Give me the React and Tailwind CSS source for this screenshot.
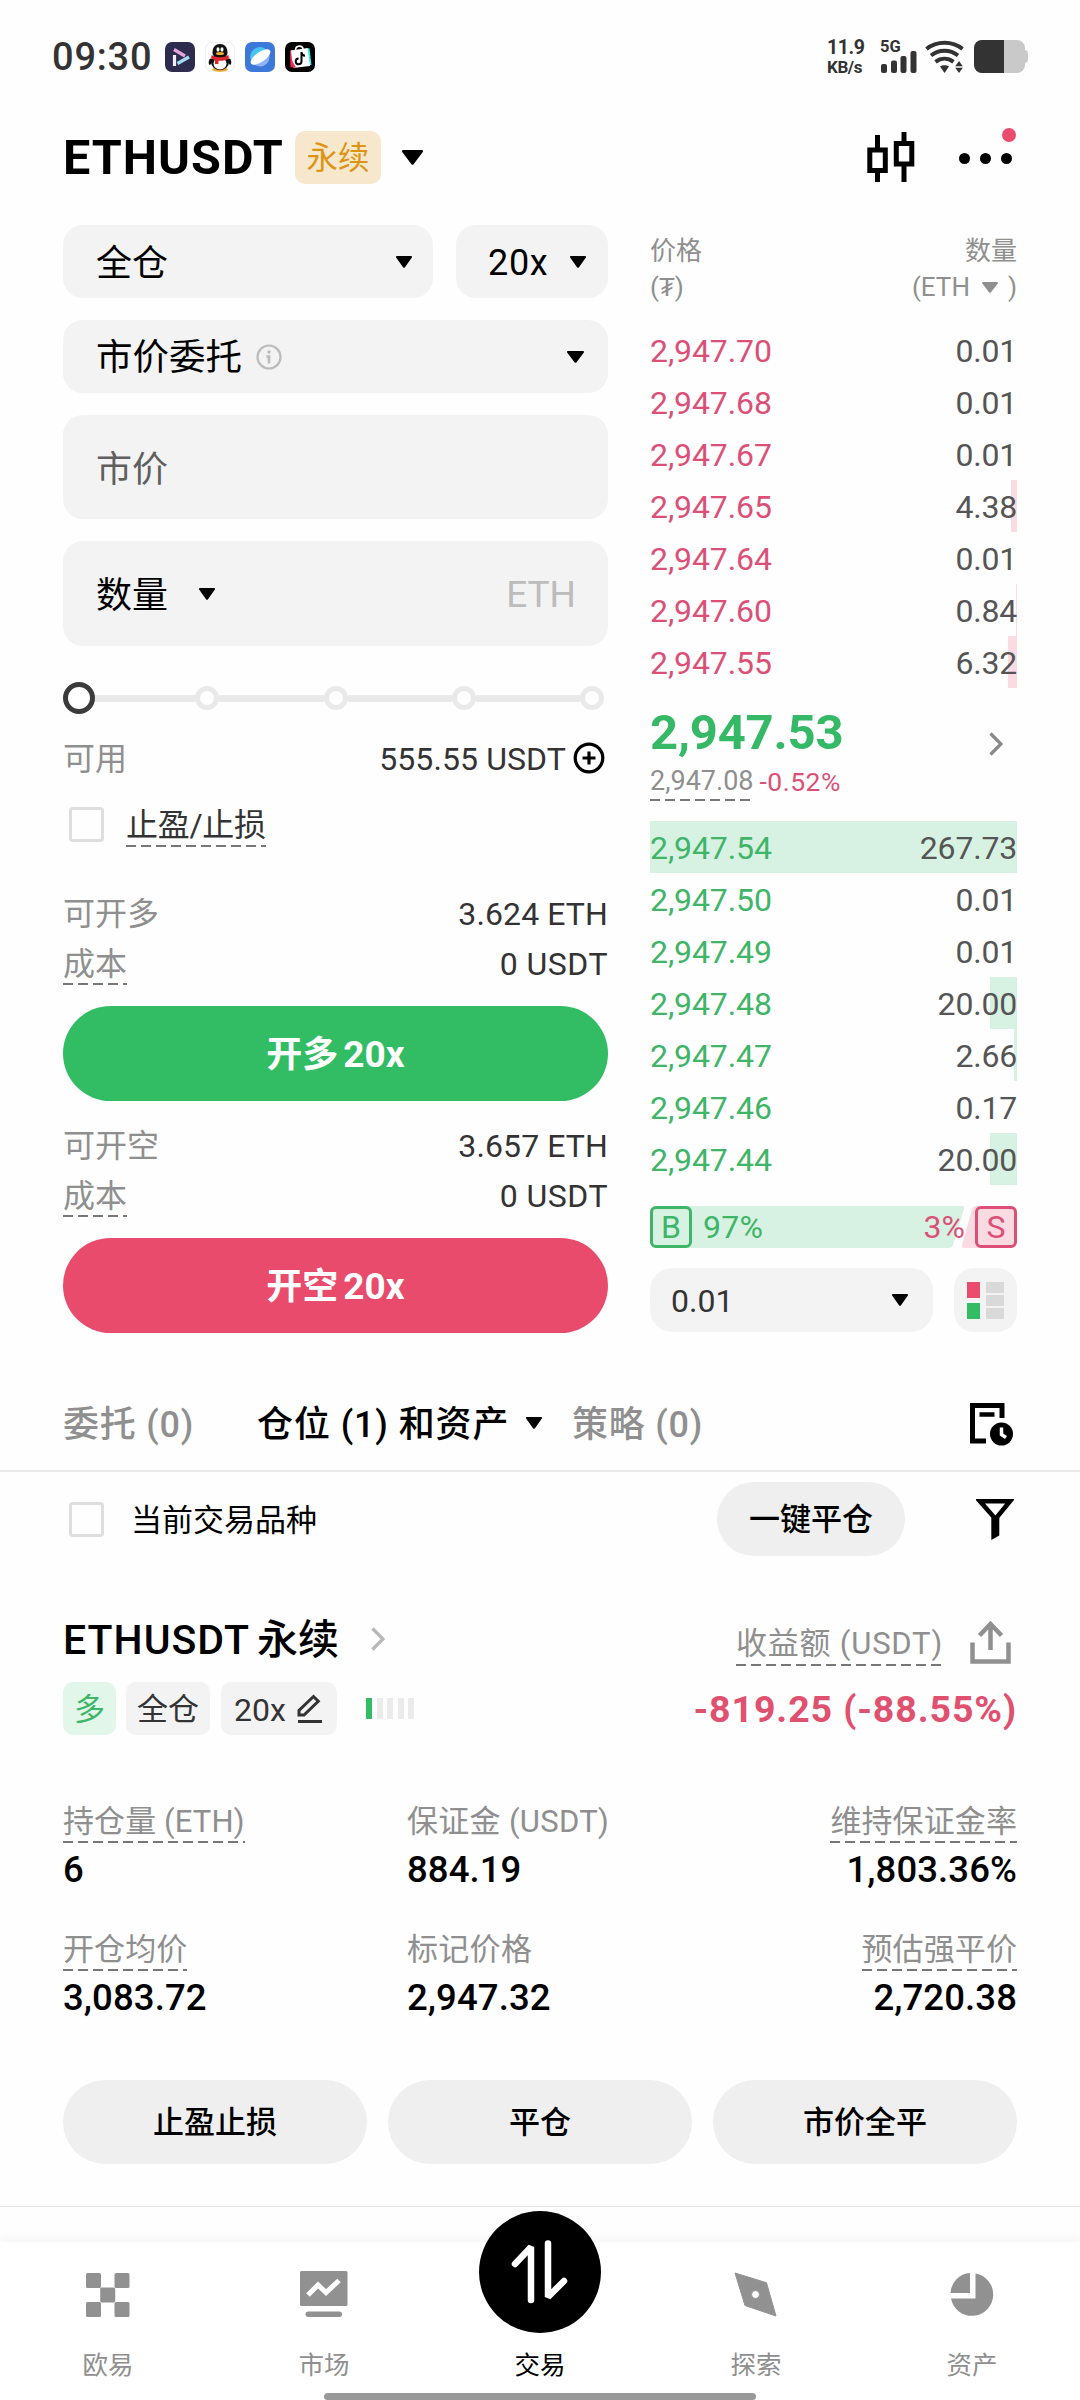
import React from "react";

const SANS = "font-['Roboto','Noto_Sans_CJK_SC',sans-serif]";

function Caret({ className = "w-4 h-3 text-black" }) {
  return (
    <svg viewBox="0 0 16 12" preserveAspectRatio="none" className={`shrink-0 ${className}`} fill="currentColor">
      <path d="M1 0h14c.9 0 1.3 1 .7 1.7L8.8 11.4c-.4.6-1.200.6-1.600 0L.3 1.700C-.3 1 .1 0 1 0z" />
    </svg>
  );
}

function Dashed({ children, className = "" }) {
  return (
    <span className={`relative ${className}`}>
      {children}
      <span className="absolute left-0 right-0 bottom-0 h-[2px] bg-[repeating-linear-gradient(90deg,#777_0_10px,transparent_10px_15px)]" />
    </span>
  );
}

function Checkbox() {
  return <span className="block size-[35px] rounded-[4px] border-[3px] border-[#dedede]" />;
}

function StatusBar() {
  return (
    <div className="flex h-[114px] shrink-0 items-center pl-[52px] pr-[51px] text-[#333]">
      <span className="w-[113px] text-[38px] leading-none font-medium tracking-[0.8px]">09:30</span>
      <div className="flex gap-[10px]">
        <svg viewBox="0 0 30 30" className="size-[30px]">
          <rect width="30" height="30" rx="7" fill="#2d2b4e" />
          <path d="M9.500 13v11" stroke="#f1eefc" strokeWidth="3.200" />
          <path d="M9 7.500l11 6.500" stroke="#e7a4dc" strokeWidth="3.200" />
          <path d="M12.500 21.500L24 15" stroke="#a3dcf0" strokeWidth="3.200" />
        </svg>
        <svg viewBox="0 0 30 30" className="size-[30px]">
          <rect x=".5" y=".5" width="29" height="29" rx="7" fill="#fff" stroke="#eee" />
          <ellipse cx="15" cy="27.500" rx="8" ry="2.200" fill="#f0ab2c" />
          <path d="M5 16.500c-2 3-1.500 6 0 6.500l4-5zM25 16.500c2 3 1.500 6 0 6.500l-4-5z" fill="#111" />
          <ellipse cx="15" cy="20" rx="9" ry="8.300" fill="#111" />
          <ellipse cx="15" cy="21.500" rx="6.500" ry="6" fill="#fff" />
          <path d="M7.500 11C7.500 5 10.500 2 15 2s7.500 3 7.500 9c0 3-3 5-7.500 5s-7.500-2-7.500-5z" fill="#111" />
          <ellipse cx="13" cy="7.500" rx="1.500" ry="2.200" fill="#fff" />
          <ellipse cx="17" cy="7.500" rx="1.500" ry="2.200" fill="#fff" />
          <ellipse cx="15" cy="11.500" rx="4" ry="1.500" fill="#f0ab2c" />
          <path d="M6.500 13c4 3 13 3 17 0l.5 3.500c-3 1.800-7 2.500-10.500 2.200V22h-3.500v-4c-1.500-.4-3-1-4-1.500z" fill="#e0252c" />
        </svg>
        <svg viewBox="0 0 30 30" className="size-[30px]">
          <rect width="30" height="30" rx="7" fill="#3c78d8" />
          <circle cx="15" cy="15" r="9.500" fill="#8fb4f4" />
          <path d="M6 18a9.500 9.500 0 0 1 15-10.500z" fill="#45c3f2" />
          <ellipse cx="15.500" cy="15" rx="11.500" ry="5" transform="rotate(-35 15.500 15)" fill="#fff" />
        </svg>
        <svg viewBox="0 0 30 30" className="size-[30px]">
          <rect width="30" height="30" rx="7" fill="#000" />
          <path d="M10.500 8c.2-5 7-5 7.500-1" fill="none" stroke="#fff" strokeWidth="1.600" />
          <path d="M5 8.500l3-.5-1 17-1.500.5z" fill="#fe2c55" />
          <path d="M22 6l2.500.5L26.500 23l-4 .5z" fill="#25f4ee" />
          <path d="M6 8.500L22.500 6 25 24 8 26z" fill="#fff" />
          <path d="M5.500 16L8 26l3-.4z" fill="#fe2c55" />
          <path d="M16.500 10v9.300a2.900 2.900 0 1 1-2.900-2.900M16.500 10.500c.3 2 1.500 3 3.500 3.200" fill="none" stroke="#000" strokeWidth="2" />
        </svg>
      </div>
      <div className="ml-auto flex items-start">
        <div className="flex w-[53px] flex-col items-start pt-0 font-bold">
          <span className="text-[19.500px] leading-[16px] tracking-[-0.4px]">11.9</span>
          <span className="mt-[4px] text-[17px] leading-[15px] tracking-[-0.4px]">KB/s</span>
        </div>
        <div className="relative h-[33px] w-[39px]">
          <span className="absolute left-0 top-0 text-[16.500px] font-bold leading-[14px]">5G</span>
          <svg viewBox="0 0 39 33" className="h-[33px] w-[39px]" fill="#333">
            <rect x="1" y="24" width="6" height="9" rx="2" />
            <rect x="11" y="20.500" width="6" height="12.500" rx="2" />
            <rect x="20.500" y="16" width="6" height="17" rx="2" />
            <rect x="30.500" y="11" width="6" height="22" rx="2" />
          </svg>
        </div>
        <svg viewBox="0 0 48 33" className="ml-[6px] h-[33px] w-[48px]" fill="none" stroke="#333" strokeWidth="4">
          <path d="M1.500 9c10-8.300 26-8.300 36 0" />
          <path d="M6 15.500c8-6.300 19-6.300 27 0" />
          <path d="M10.500 21.800c5.500-4 12.500-4 18 0" />
          <path d="M15 26.500c2.500-1.800 6.500-1.800 9 0L19.500 33z" fill="#333" stroke="none" />
          <path d="M34 21l3.800 5.200h-7.600zM34 33l3.800-5.200h-7.600z" fill="#333" stroke="none" />
        </svg>
        <svg viewBox="0 0 56 33" className="h-[33px] w-[56px]">
          <path d="M9 0h35a8 8 0 0 1 8 8v2c2 .5 3 1.500 3 3.500v6c0 2-1 3-3 3.500v2a8 8 0 0 1-8 8H9a8 8 0 0 1-8-8V8a8 8 0 0 1 8-8z" fill="#c9c9c9" />
          <path d="M9 0h22v33H9a8 8 0 0 1-8-8V8a8 8 0 0 1 8-8z" fill="#333" />
        </svg>
      </div>
    </div>
  );
}

function Header() {
  return (
    <div className="flex h-[86px] shrink-0 items-center pl-[63px] pr-[63px]">
      <span className="w-[232px] pt-[2px] text-[48.500px] font-bold leading-none tracking-[1px]">ETHUSDT</span>
      <span className="flex h-[53px] w-[86px] items-center justify-center rounded-[10px] bg-[#f7e8cd] pt-[4px] text-[31.500px] text-[#dd9413]">永续</span>
      <Caret className="ml-[21px] h-[15px] w-[21px] text-black" />
      <svg viewBox="0 0 48 50" className="ml-auto h-[50px] w-[48px]" fill="none" stroke="#000" strokeWidth="5">
        <rect x="2.800" y="18" width="15.500" height="20.500" />
        <path d="M10.500 3v14M10.500 39v11" />
        <rect x="29.300" y="11.500" width="15.500" height="20.500" />
        <path d="M37 0v11M37 33v17" />
      </svg>
      <span className="relative ml-[44px] flex gap-[10px] pt-[2px]">
        <i className="size-[11px] rounded-full bg-black" />
        <i className="size-[11px] rounded-full bg-black" />
        <i className="size-[11px] rounded-full bg-black" />
        <i className="absolute -right-[4px] -top-[23px] size-[14px] rounded-full bg-[#eb4b6d]" />
      </span>
      <span className="w-[5px]" />
    </div>
  );
}

function Field({ className, children }) {
  return <div className={`flex items-center rounded-[20px] bg-[#f3f3f3] ${className}`}>{children}</div>;
}

function Slider() {
  return (
    <div className="mt-[36px] flex h-8 items-center">
      <i className="relative -mr-1 size-8 shrink-0 rounded-full border-[5px] border-[#3b3b3b] bg-white" />
      {[0, 1, 2, 3].map((n) => (
        <React.Fragment key={n}>
          <i className="h-[7px] flex-1 bg-[#e9e9e9]" />
          <i className="size-6 shrink-0 rounded-full border-[5px] border-[#e9e9e9]" />
        </React.Fragment>
      ))}
      <i className="w-1" />
    </div>
  );
}

function InfoRow({ label, value, dashed, className = "" }) {
  return (
    <div className={`flex h-[50px] items-center justify-between text-[32px] ${className}`}>
      {dashed ? (
        <Dashed className="flex h-[44px] items-center pt-[2px] text-[#8f8f8f]">{label}</Dashed>
      ) : (
        <span className="pt-[2px] text-[#8f8f8f]">{label}</span>
      )}
      <span className="pt-px tracking-[0.1px] text-[#333]">{value}</span>
    </div>
  );
}

function OrderForm() {
  return (
    <div className="flex w-[545px] flex-col">
      <div className="flex gap-[23px]">
        <Field className="h-[73px] w-[370px] justify-between pl-[33px] pr-[21px] text-[36px]">
          <span className="pt-[4px]">全仓</span>
          <Caret />
        </Field>
        <Field className="h-[73px] flex-1 justify-between pl-[32px] pr-[22px] text-[36px]">
          <span className="pt-[3px] tracking-[0.7px]">20x</span>
          <Caret />
        </Field>
      </div>
      <Field className="mt-[22px] h-[73px] pl-[33px] pr-[24px] text-[36.500px]">
        <span className="pt-[4px]">市价委托</span>
        <svg viewBox="0 0 26 26" className="ml-[14px] size-[26px]">
          <circle cx="13" cy="13" r="11.500" fill="none" stroke="#bbb" strokeWidth="2.200" />
          <circle cx="13" cy="8" r="1.700" fill="#bbb" />
          <path d="M10.500 12.500H13V19.500" fill="none" stroke="#bbb" strokeWidth="2.600" />
        </svg>
        <Caret className="ml-auto h-3 w-[17px] text-black" />
      </Field>
      <Field className="mt-[22px] h-[104px] pl-[33px] pt-[6px] text-[36px] text-[#5f5f5f]">市价</Field>
      <Field className="mt-[22px] h-[105px] pl-[33px] pr-[32px] text-[36px]">
        <span className="pt-[5px]">数量</span>
        <Caret className="ml-[31px] h-3 w-4 text-black" />
        <span className="ml-auto pt-[3px] text-[37px] text-[#bcbcbc]">ETH</span>
      </Field>
      <Slider />
      <div className="mt-[22px] flex h-[44px] items-center text-[32px]">
        <span className="pt-px text-[#8f8f8f]">可用</span>
        <span className="ml-auto mr-[7px] pt-px text-[#333] tracking-[0.1px]">555.55 USDT</span>
        <svg viewBox="0 0 32 32" className="mr-[3px] size-[32px]" fill="none" stroke="#000" strokeWidth="3.200">
          <circle cx="16" cy="16" r="13.800" />
          <path d="M16 9.500v13M9.500 16h13" />
        </svg>
      </div>
      <div className="mt-[22px] flex h-[45px] items-center pl-[6px] text-[32px] text-[#333]">
        <Checkbox />
        <Dashed className="ml-[22px] flex h-[44px] items-center pt-px tracking-[-0.3px]">止盈/止损</Dashed>
      </div>
      <InfoRow className="mt-[41px]" label="可开多" value="3.624 ETH" />
      <InfoRow dashed label="成本" value={<span className="tracking-[0.5px]">0 USDT</span>} />
      <button className="mt-[18px] h-[95px] rounded-full bg-[#32bd65] pt-[2px] text-[36px] font-bold text-white">
        开多<span className="ml-[5px] text-[37px]">20x</span>
      </button>
      <InfoRow className="mt-[19px]" label="可开空" value="3.657 ETH" />
      <InfoRow dashed label="成本" value={<span className="tracking-[0.5px]">0 USDT</span>} />
      <button className="mt-[18px] h-[95px] rounded-full bg-[#e94b6c] pt-[2px] text-[36px] font-bold text-white">
        开空<span className="ml-[5px] text-[37px]">20x</span>
      </button>
    </div>
  );
}

const ASKS = [
  ["2,947.70", "0.01", 0],
  ["2,947.68", "0.01", 0],
  ["2,947.67", "0.01", 0],
  ["2,947.65", "4.38", 6],
  ["2,947.64", "0.01", 0],
  ["2,947.60", "0.84", 1],
  ["2,947.55", "6.32", 9],
];
const BIDS = [
  ["2,947.54", "267.73", 367],
  ["2,947.50", "0.01", 0],
  ["2,947.49", "0.01", 0],
  ["2,947.48", "20.00", 27],
  ["2,947.47", "2.66", 3],
  ["2,947.46", "0.17", 0],
  ["2,947.44", "20.00", 27],
];

function BookRow({ row, color, bar }) {
  return (
    <div className="relative flex h-[52px] items-center justify-between pt-px text-[32px]">
      <span className={`absolute inset-y-0 right-0 ${bar}`} style={{ width: row[2] }} />
      <span className={`relative tracking-[-0.1px] ${color}`}>{row[0]}</span>
      <span className="relative tracking-[-0.2px] text-[#555]">{row[1]}</span>
    </div>
  );
}

function OrderBook() {
  return (
    <div className="flex w-[367px] flex-col">
      <div className="mt-[7px] flex justify-between text-[26px] leading-[36px] text-[#8f8f8f]">
        <div className="pt-px">
          价格
          <br />
          (₮)
        </div>
        <div className="pt-px text-right">
          数量
          <div className="flex items-center justify-end">
            (ETH
            <Caret className="ml-[12px] mr-[10px] h-[11px] w-4 text-[#8f8f8f]" />)
          </div>
        </div>
      </div>
      <div className="mt-[19px]">
        {ASKS.map((r) => (
          <BookRow key={r[0]} row={r} color="text-[#dc5078]" bar="bg-[#fbdbe2]" />
        ))}
      </div>
      <div className="mt-5 flex">
        <div>
          <div className="pt-px text-[49px] font-bold leading-[48px] tracking-[-0.2px] text-[#36b966]">2,947.53</div>
          <div className="mt-[6px] flex h-[37px] items-center text-[27px]">
            <Dashed className="flex h-[38px] items-center text-[#8f8f8f]">2,947.08</Dashed>
            <span className="ml-[6px] pt-px text-[26.500px] tracking-[0.5px] text-[#dc5078]">-0.52%</span>
          </div>
        </div>
        <svg viewBox="0 0 14 24" className="ml-auto mr-[14px] mt-[24px] h-[24px] w-[14px]" fill="none" stroke="#8a8a8a" strokeWidth="3.300">
          <path d="M1.500 1.500L12 12 1.500 22.500" />
        </svg>
      </div>
      <div className="mt-[21px]">
        {BIDS.map((r) => (
          <BookRow key={r[0]} row={r} color="text-[#3fb568]" bar="bg-[#d7f1e2]" />
        ))}
      </div>
      <div className="relative mt-[21px] flex h-[42px] items-center text-[32px]">
        <svg viewBox="0 0 367 42" className="absolute inset-0 h-[42px] w-[367px]">
          <path d="M6 0H312q3 0 2 3L303 39q-1 3-4 3H6a6 6 0 0 1-6-6V6a6 6 0 0 1 6-6z" fill="#d7f1e2" />
          <path d="M326 0h35a6 6 0 0 1 6 6v30a6 6 0 0 1-6 6H314q-3 0-2-3l10-36q1-3 4-3z" fill="#fbdbe2" />
        </svg>
        <span className="relative flex size-[42px] items-center justify-center rounded-[6px] border-[3px] border-[#3fb568] text-[32px] text-[#3fb568]">B</span>
        <span className="relative ml-[11px] tracking-[0.3px] text-[#3fb568]">97%</span>
        <span className="relative ml-auto mr-[10px] text-[#dc5078]">3%</span>
        <span className="relative flex size-[42px] items-center justify-center rounded-[6px] border-[3px] border-[#dc5078] text-[32px] text-[#dc5078]">S</span>
      </div>
      <div className="mt-5 flex gap-[21px]">
        <div className="flex h-[64px] flex-1 items-center justify-between rounded-[22px] bg-[#f3f3f3] pl-[21px] pr-[25px] text-[32px] text-[#333]">
          <span className="pt-[2px]">0.01</span>
          <Caret className="h-3 w-4 text-black" />
        </div>
        <div className="flex h-[64px] w-[63px] items-center justify-center rounded-[20px] bg-[#f3f3f3] pr-px">
          <svg viewBox="0 0 37 37" className="size-[37px]">
            <rect width="13" height="16" fill="#eb4b6d" />
            <rect y="21" width="13" height="16" fill="#32bd65" />
            <rect x="19" width="18" height="11" fill="#d9d9d9" />
            <rect x="19" y="13" width="18" height="11" fill="#d9d9d9" />
            <rect x="19" y="26" width="18" height="11" fill="#d9d9d9" />
          </svg>
        </div>
      </div>
    </div>
  );
}

function Tabs() {
  return (
    <div className="mt-[43px] flex h-[96px] shrink-0 items-center border-b-2 border-[#e9e9e9] pl-[63px] pr-[67px] text-[36px] font-medium text-[#8f8f8f]">
      <span className="w-[194px] pt-[4px] tracking-[0.8px]">委托 (0)</span>
      <span className="w-[251px] whitespace-nowrap pt-[4px] tracking-[0.9px] text-black">仓位 (1) 和资产</span>
      <Caret className="ml-[18px] h-3 w-4 text-black" />
      <span className="ml-[30px] pt-[4px] tracking-[0.8px]">策略 (0)</span>
      <svg viewBox="0 0 43 43" className="ml-auto mt-[2px] size-[43px]">
        <path d="M32 15V2.500H2.500V38H16" fill="none" stroke="#000" strokeWidth="5" />
        <path d="M9.500 11.500h15" stroke="#000" strokeWidth="4.500" />
        <circle cx="31.500" cy="31" r="11.500" fill="#000" />
        <path d="M31.500 24.500v7l4.500 3" fill="none" stroke="#fff" strokeWidth="3.500" />
      </svg>
    </div>
  );
}

function Stat({ label, value, dashed, className = "" }) {
  return (
    <div className={`flex flex-col ${className}`}>
      {dashed ? (
        <Dashed className="flex h-[44px] items-center pt-[2px] text-[31px] tracking-[0.1px] text-[#8f8f8f]">{label}</Dashed>
      ) : (
        <span className="flex h-[44px] items-center pt-[2px] text-[31px] tracking-[0.3px] text-[#8f8f8f]">{label}</span>
      )}
      <span className="mt-[2px] h-[48px] pt-px text-[36.500px] font-medium leading-[48px] tracking-[0.1px]">{value}</span>
    </div>
  );
}

function Position() {
  return (
    <div className="flex flex-col px-[63px]">
      <div className="mt-[10px] flex h-[74px] items-center pl-[6px]">
        <Checkbox />
        <span className="ml-[27px] pt-[5px] text-[31px]">当前交易品种</span>
        <button className="ml-auto h-[74px] w-[188px] rounded-full bg-[#efefef] pt-[3px] text-[31px] font-medium">一键平仓</button>
        <svg viewBox="0 0 38 43" className="ml-[71px] mr-[3px] h-[43px] w-[38px]">
          <path d="M4 3.300H34L19.500 21z" fill="none" stroke="#000" strokeWidth="4.600" />
          <path d="M15.300 20h8v17.500l-8 4.500z" fill="#000" />
        </svg>
      </div>
      <div className="mt-[55px] flex h-[56px] items-center">
        <span className="w-[306px] whitespace-nowrap pt-px text-[41px] font-medium leading-[56px]">
          <span className="tracking-[1px]">ETHUSDT</span>
          <span className="ml-[7px]">永续</span>
        </span>
        <svg viewBox="0 0 14 24" className="ml-[2px] h-[24px] w-[14px]" fill="none" stroke="#b8b8b8" strokeWidth="3.300">
          <path d="M1.500 1.500L12 12 1.500 22.500" />
        </svg>
        <Dashed className="ml-auto mt-[10px] flex h-[44px] items-center text-[31px] tracking-[0.8px] text-[#8f8f8f]">收益额 (USDT)</Dashed>
        <svg viewBox="0 0 41 43" className="ml-[27px] mr-[6px] mt-[7px] h-[43px] w-[41px]" fill="none" stroke="#909090" strokeWidth="4.500">
          <path d="M2.500 21.500V40.500H38.500V21.500M20.500 29V3M9.500 14.500l11-11.500 11 11.500" />
        </svg>
      </div>
      <div className="mt-[15px] flex h-[53px] items-center text-[31px] text-[#333]">
        <span className="flex h-[53px] w-[53px] items-center justify-center rounded-[10px] bg-[#e2f6ea] pt-[3px] text-[#3fb568]">多</span>
        <span className="ml-[10px] flex h-[53px] w-[84px] items-center justify-center rounded-[10px] bg-[#f3f3f3] pt-[3px]">全仓</span>
        <span className="ml-[11px] flex h-[53px] w-[116px] items-center justify-center rounded-[10px] bg-[#f3f3f3]">
          <span className="pt-[2px] text-[32px]">20x</span>
          <svg viewBox="0 0 28 30" className="ml-[10px] h-[30px] w-[28px]" fill="none" stroke="#333" strokeWidth="3">
            <path d="M3 21v-4.500L17.500 2.500l4.800 4.800L8 21z" />
            <path d="M2 27.500h24" />
          </svg>
        </span>
        <span className="ml-[29px] flex h-[21px] gap-[4.500px]">
          <i className="w-[6px] bg-[#32bd65]" />
          <i className="w-[6px] bg-[#ebebeb]" />
          <i className="w-[6px] bg-[#ebebeb]" />
          <i className="w-[6px] bg-[#ebebeb]" />
          <i className="w-[6px] bg-[#ebebeb]" />
        </span>
        <span className="ml-auto pt-px text-[37.500px] font-bold tracking-[0.9px] text-[#e0506f]">-819.25 (-88.55%)</span>
      </div>
      <div className="mt-[64px] grid grid-cols-[344px_1fr_auto] gap-y-[34px]">
        <Stat className="items-start" label="持仓量 (ETH)" value="6" dashed />
        <Stat className="items-start" label="保证金 (USDT)" value="884.19" />
        <Stat className="items-end" label="维持保证金率" value="1,803.36%" dashed />
        <Stat className="items-start" label="开仓均价" value="3,083.72" dashed />
        <Stat className="items-start" label="标记价格" value="2,947.32" />
        <Stat className="items-end" label="预估强平价" value="2,720.38" dashed />
      </div>
      <div className="mt-[59px] grid grid-cols-3 gap-[21px] text-[31px] font-medium">
        <button className="h-[84px] rounded-full bg-[#efefef] pt-[3px]">止盈止损</button>
        <button className="h-[84px] rounded-full bg-[#efefef] pt-[3px]">平仓</button>
        <button className="h-[84px] rounded-full bg-[#efefef] pt-[3px]">市价全平</button>
      </div>
    </div>
  );
}

function NavItem({ label, children }) {
  return (
    <div className="flex flex-1 flex-col items-center pt-[27px]">
      <svg viewBox="0 0 50 50" className="size-[50px]" fill="#919191">
        {children}
      </svg>
      <span className="mt-[28px] text-[25.500px] leading-[36px] text-[#8f8f8f]">{label}</span>
    </div>
  );
}

function BottomNav() {
  return (
    <div className="relative mt-[35px] flex h-[158px] shrink-0 bg-white shadow-[0_-4px_10px_rgba(0,0,0,0.04)]">
      <NavItem label="欧易">
        <rect x="3" y="4" width="15" height="15" rx="1.500" />
        <rect x="31.500" y="4" width="15" height="15" rx="1.500" />
        <rect x="17.200" y="18.500" width="15" height="15" rx="1.500" />
        <rect x="3" y="33" width="15" height="15" rx="1.500" />
        <rect x="31.500" y="33" width="15" height="15" rx="1.500" />
      </NavItem>
      <NavItem label="市场">
        <rect x="1" y="2" width="47.500" height="35" rx="1.500" />
        <rect x="6.500" y="42.500" width="36.500" height="5.500" rx="2.750" />
        <path d="M9 26l10-10 8 7.500L40 11.500" fill="none" stroke="#fff" strokeWidth="5" />
      </NavItem>
      <div className="flex flex-1 flex-col items-center">
        <svg viewBox="0 0 122 122" className="-mt-[31px] size-[122px]">
          <circle cx="61" cy="61" r="61" fill="#000" />
          <path d="M36 53L52 36v53M69 32.500v53.500L85 70" fill="none" stroke="#fff" strokeWidth="6.500" strokeLinecap="round" strokeLinejoin="bevel" />
        </svg>
        <span className="mt-[14px] text-[25.500px] leading-[36px] text-black">交易</span>
      </div>
      <NavItem label="探索">
        <path fillRule="evenodd" d="M4 4L35.500 13.700 45 47 14 36.500zM24.500 21.500a4 4 0 1 0 0 8 4 4 0 0 0 0-8z" stroke="#919191" strokeWidth="1" strokeLinejoin="round" />
      </NavItem>
      <NavItem label="资产">
        <path d="M23 4V24H3.500A21 21 0 0 1 23 4z" />
        <path d="M28.500 4.500A21.300 21.300 0 1 1 4 29.500H28.500z" />
      </NavItem>
      <span className="absolute bottom-0 left-[324px] h-[7px] w-[432px] rounded-full bg-[#999]" />
    </div>
  );
}

export default function App() {
  return (
    <div className={`flex h-[2400px] w-[1080px] flex-col overflow-hidden bg-[#fefefe] text-black ${SANS}`}>
      <StatusBar />
      <Header />
      <div className="flex shrink-0 justify-between px-[63px] pt-[25px]">
        <OrderForm />
        <OrderBook />
      </div>
      <Tabs />
      <Position />
      <div className="mt-[42px] h-px shrink-0 bg-[#e6e6e6]" />
      <BottomNav />
    </div>
  );
}
